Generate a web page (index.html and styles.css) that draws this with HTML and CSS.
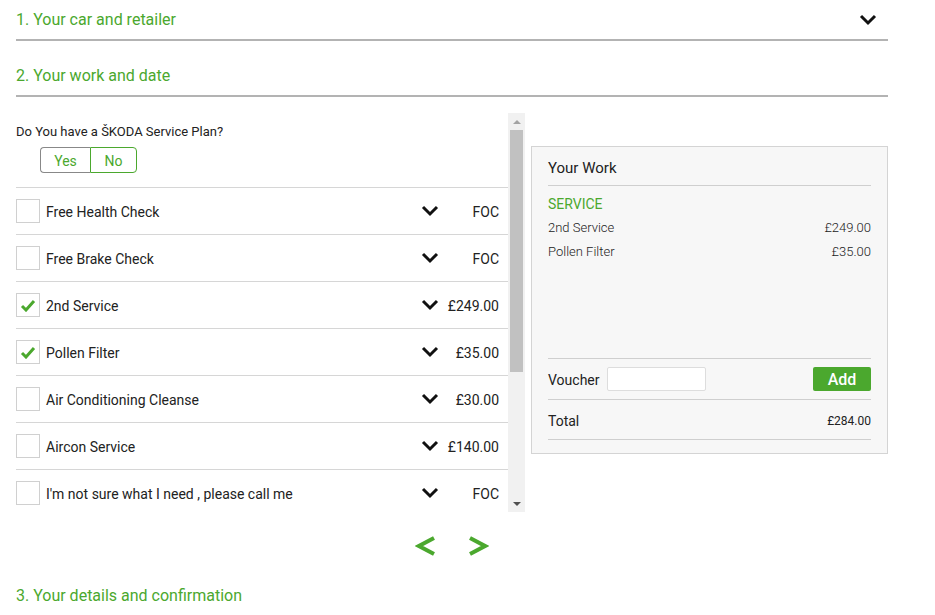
FILE: index.html
```html
<!DOCTYPE html>
<html lang="en">
<head>
    <meta charset="UTF-8">
    <meta name="viewport" content="width=device-width, initial-scale=1.0">
    <title>Book a Service</title>
    <link rel="stylesheet" href="styles.css">
</head>
<body>
    <div class="booking">
        <!-- Step 1 (collapsed) -->
        <div class="step step-first">
            <h2 class="step-title">1. Your car and retailer</h2>
            <svg class="step-toggle" width="18" height="12" viewBox="0 0 18 12">
                <polyline points="2,2 9,9 16,2" fill="none" stroke="#111" stroke-width="3"/>
            </svg>
        </div>

        <!-- Step 2 (open) -->
        <div class="step">
            <h2 class="step-title">2. Your work and date</h2>
        </div>
        <div class="step-body">
            <div class="work-select">
                <div class="work-list">
                    <div class="plan-question">
                        <p>Do You have a ŠKODA Service Plan?</p>
                        <div class="toggle">
                            <button type="button" class="toggle-yes">Yes</button>
                            <button type="button" class="toggle-no">No</button>
                        </div>
                    </div>

                    <div class="work-row">
                        <span class="check"></span>
                        <span class="work-name">Free Health Check</span>
                        <span class="work-more"><svg width="18" height="12" viewBox="0 0 18 12"><polyline points="2,2 9,9 16,2" fill="none" stroke="#111" stroke-width="3"/></svg></span>
                        <span class="work-price">FOC</span>
                    </div>
                    <div class="work-row">
                        <span class="check"></span>
                        <span class="work-name">Free Brake Check</span>
                        <span class="work-more"><svg width="18" height="12" viewBox="0 0 18 12"><polyline points="2,2 9,9 16,2" fill="none" stroke="#111" stroke-width="3"/></svg></span>
                        <span class="work-price">FOC</span>
                    </div>
                    <div class="work-row">
                        <span class="check checked"><svg width="16" height="13" viewBox="0 0 16 13"><polyline points="2,7 6,11 14,2" fill="none" stroke="#4ba82e" stroke-width="3"/></svg></span>
                        <span class="work-name">2nd Service</span>
                        <span class="work-more"><svg width="18" height="12" viewBox="0 0 18 12"><polyline points="2,2 9,9 16,2" fill="none" stroke="#111" stroke-width="3"/></svg></span>
                        <span class="work-price">£249.00</span>
                    </div>
                    <div class="work-row">
                        <span class="check checked"><svg width="16" height="13" viewBox="0 0 16 13"><polyline points="2,7 6,11 14,2" fill="none" stroke="#4ba82e" stroke-width="3"/></svg></span>
                        <span class="work-name">Pollen Filter</span>
                        <span class="work-more"><svg width="18" height="12" viewBox="0 0 18 12"><polyline points="2,2 9,9 16,2" fill="none" stroke="#111" stroke-width="3"/></svg></span>
                        <span class="work-price">£35.00</span>
                    </div>
                    <div class="work-row">
                        <span class="check"></span>
                        <span class="work-name">Air Conditioning Cleanse</span>
                        <span class="work-more"><svg width="18" height="12" viewBox="0 0 18 12"><polyline points="2,2 9,9 16,2" fill="none" stroke="#111" stroke-width="3"/></svg></span>
                        <span class="work-price">£30.00</span>
                    </div>
                    <div class="work-row">
                        <span class="check"></span>
                        <span class="work-name">Aircon Service</span>
                        <span class="work-more"><svg width="18" height="12" viewBox="0 0 18 12"><polyline points="2,2 9,9 16,2" fill="none" stroke="#111" stroke-width="3"/></svg></span>
                        <span class="work-price">£140.00</span>
                    </div>
                    <div class="work-row">
                        <span class="check"></span>
                        <span class="work-name">I'm not sure what I need , please call me</span>
                        <span class="work-more"><svg width="18" height="12" viewBox="0 0 18 12"><polyline points="2,2 9,9 16,2" fill="none" stroke="#111" stroke-width="3"/></svg></span>
                        <span class="work-price">FOC</span>
                    </div>
                </div>
                <!-- scrollbar of the work list -->
                <div class="list-scroll">
                    <span class="scroll-arrow up"></span>
                    <span class="scroll-thumb"></span>
                    <span class="scroll-fill"></span>
                    <span class="scroll-arrow down"></span>
                </div>
            </div>

            <!-- Summary of selected work -->
            <div class="summary">
                <h3 class="summary-title">Your Work</h3>
                <div class="summary-items">
                    <div class="summary-group">SERVICE</div>
                    <div class="summary-line"><span>2nd Service</span><span>£249.00</span></div>
                    <div class="summary-line"><span>Pollen Filter</span><span>£35.00</span></div>
                </div>
                <div class="voucher">
                    <label for="voucher">Voucher</label>
                    <input type="text" id="voucher" name="voucher">
                    <button type="button" class="btn-add">Add</button>
                </div>
                <div class="summary-total"><span>Total</span><span class="total-price">£284.00</span></div>
            </div>
        </div>

        <div class="step-nav">
            <svg width="22" height="22" viewBox="0 0 22 22"><polyline points="19,3 4,11 19,19" fill="none" stroke="#4ba82e" stroke-width="4"/></svg>
            <svg width="22" height="22" viewBox="0 0 22 22"><polyline points="3,3 18,11 3,19" fill="none" stroke="#4ba82e" stroke-width="4"/></svg>
        </div>

        <!-- Step 3 (collapsed) -->
        <div class="step">
            <h2 class="step-title">3. Your details and confirmation</h2>
        </div>
    </div>
</body>
</html>
```

FILE: styles.css
```css
body {
    font-family: Roboto, "Liberation Sans", sans-serif;
    margin: 0;
    padding: 0;
    background-color: #fff;
    color: #222;
    overflow: hidden;
}
.booking {
    width: 872px;
    margin-left: 16px;
}

/* Step headers */
.step {
    display: flex;
    justify-content: space-between;
    align-items: center;
    padding: 23px 0 7px;
    border-bottom: 2px solid #b3b3b3;
}
.step-first {
    padding-top: 8px;
}
.step-title {
    margin: 0;
    font-size: 16px;
    line-height: 24px;
    font-weight: 400;
    color: #4ba82e; /* Skoda green */
}
.step-toggle {
    margin-right: 11px;
}

.step-body {
    display: flex;
    align-items: flex-start;
    gap: 6px;
    padding-top: 16px;
}

/* Work list with its scrollbar */
.work-select {
    display: flex;
    width: 509px;
    height: 399px;
}
.work-list {
    flex: 1;
    overflow: hidden;
}
.plan-question {
    padding: 10px 0 14px;
}
.plan-question p {
    margin: 0;
    font-size: 13px;
    line-height: 18px;
}
.toggle {
    display: flex;
    margin: 6px 0 0 24px;
}
.toggle button {
    height: 26px;
    padding: 1px 0 0;
    background: #fff;
    color: #4ba82e;
    font-family: inherit;
    font-size: 14px;
    cursor: pointer;
}
.toggle-yes {
    width: 50px;
    border: 1px solid #888;
    border-right: none;
    border-radius: 4px 0 0 4px;
}
.toggle-no {
    width: 47px;
    border: 1px solid #4ba82e;
    border-radius: 0 4px 4px 0;
}

.work-row {
    display: flex;
    align-items: center;
    height: 46px;
    border-top: 1px solid #d6d6d6;
    font-size: 14px;
}
.check {
    display: flex;
    align-items: center;
    justify-content: center;
    width: 22px;
    height: 22px;
    border: 1px solid #d0d0d0;
    background: #fff;
    margin-right: 6px;
}
.work-name,
.work-price {
    padding-top: 2px;
}
.work-name {
    flex: 1;
}
.work-more {
    display: flex;
    justify-content: center;
    width: 30px;
}
.work-price {
    width: 54px;
    text-align: right;
    padding-right: 9px;
}

.list-scroll {
    display: flex;
    flex-direction: column;
    align-items: center;
    width: 17px;
    background: #f1f1f1;
}
.scroll-arrow {
    display: flex;
    align-items: center;
    justify-content: center;
    height: 17px;
}
.scroll-arrow::before {
    content: "";
    border-left: 4px solid transparent;
    border-right: 4px solid transparent;
}
.scroll-arrow.up::before {
    border-bottom: 4px solid #a3a3a3;
}
.scroll-arrow.down::before {
    border-top: 4px solid #505050;
}
.scroll-thumb {
    width: 13px;
    height: 242px;
    background: #c1c1c1;
}
.scroll-fill {
    flex: 1;
}

/* Summary panel */
.summary {
    width: 323px;
    margin-top: 33px;
    padding: 0 16px 13px;
    background: #f7f7f7;
    border: 1px solid #d4d4d4;
}
.summary-title {
    margin: 0;
    padding: 11px 0 7px;
    font-size: 15px;
    line-height: 20px;
    font-weight: 400;
    border-bottom: 1px solid #cfcfcf;
}
.summary-items {
    min-height: 166px;
    padding-top: 6px;
}
.summary-group {
    color: #4ba82e;
    font-size: 14px;
    line-height: 24px;
}
.summary-line {
    display: flex;
    justify-content: space-between;
    font-size: 13px;
    font-weight: 300;
    line-height: 24px;
}
.voucher {
    display: flex;
    align-items: center;
    padding: 8px 0;
    border-top: 1px solid #cfcfcf;
    border-bottom: 1px solid #cfcfcf;
    font-size: 14px;
}
.voucher label {
    width: 59px;
    padding-top: 2px;
}
.voucher input {
    width: 97px;
    height: 22px;
    padding: 0;
    border: 1px solid #ddd;
    border-radius: 2px;
    background: #fff;
}
.btn-add {
    margin-left: auto;
    width: 58px;
    height: 24px;
    padding: 0;
    border: none;
    border-radius: 2px;
    background: #4ba82e;
    color: #fff;
    font-family: inherit;
    font-size: 16px;
    font-weight: 500;
    cursor: pointer;
}
.summary-total {
    display: flex;
    justify-content: space-between;
    align-items: center;
    height: 37px;
    padding-top: 2px;
    border-bottom: 1px solid #cfcfcf;
    font-size: 14px;
}
.total-price {
    font-size: 12px;
}

/* Prev / next arrows */
.step-nav {
    display: flex;
    justify-content: center;
    gap: 30px;
    padding: 23px 0 4px;
}
```
